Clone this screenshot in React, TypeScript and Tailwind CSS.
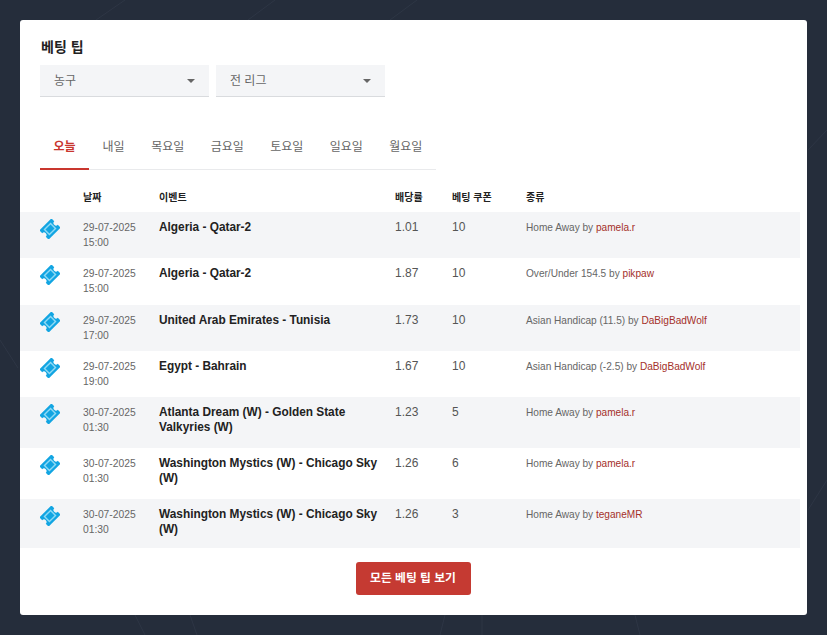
const rows = [
  { d: "29-07-2025", t: "15:00", e: "Algeria - Qatar-2", o: "1.01", c: "10", k: "Home Away", u: "pamela.r", h: "h-[46.3px]" },
  { d: "29-07-2025", t: "15:00", e: "Algeria - Qatar-2", o: "1.87", c: "10", k: "Over/Under 154.5", u: "pikpaw", h: "h-[46.3px]" },
  { d: "29-07-2025", t: "17:00", e: "United Arab Emirates - Tunisia", o: "1.73", c: "10", k: "Asian Handicap (11.5)", u: "DaBigBadWolf", h: "h-[46.3px]" },
  { d: "29-07-2025", t: "19:00", e: "Egypt - Bahrain", o: "1.67", c: "10", k: "Asian Handicap (-2.5)", u: "DaBigBadWolf", h: "h-[46.3px]" },
  { d: "30-07-2025", t: "01:30", e: "Atlanta Dream (W) - Golden State Valkyries (W)", o: "1.23", c: "5", k: "Home Away", u: "pamela.r", h: "h-[50.9px]" },
  { d: "30-07-2025", t: "01:30", e: "Washington Mystics (W) - Chicago Sky (W)", o: "1.26", c: "6", k: "Home Away", u: "pamela.r", h: "h-[50.9px]" },
  { d: "30-07-2025", t: "01:30", e: "Washington Mystics (W) - Chicago Sky (W)", o: "1.26", c: "3", k: "Home Away", u: "teganeMR", h: "h-[49px]" },
];
const tabs = ["오늘", "내일", "목요일", "금요일", "토요일", "일요일", "월요일"];

function Ticket() {
  return (
    <svg width="20" height="20" viewBox="0 0 20 20" className="block">
      <g transform="rotate(-45 10 10)">
        <path d="M1.5 3.5h17v4a2.5 2.5 0 0 0 0 5v4h-17v-4a2.5 2.5 0 0 0 0-5z" fill="#12a5e2" />
        <rect x="5" y="5.8" width="10" height="8.4" fill="#8fdaf5" />
        <rect x="6.4" y="7.2" width="7.2" height="5.6" fill="#12a5e2" />
      </g>
    </svg>
  );
}

function Select({ label }: { label: string }) {
  return (
    <div className="w-[169px] h-8 bg-[#f4f5f7] border-b border-[#d9dbde] flex items-center justify-between pl-[14px] pr-[14px] text-xs text-[#666]">
      <span>{label}</span>
      <span className="w-0 h-0 border-l-[4px] border-r-[4px] border-t-[4px] border-l-transparent border-r-transparent border-t-[#666]" />
    </div>
  );
}

export default function App() {
  return (
    <div
      className="relative w-[827px] h-[635px] overflow-hidden bg-[#252d3b] pt-5 pl-5"
      style={{ fontFamily: '"Liberation Sans", "Noto Sans CJK KR", sans-serif' }}
    >
      <svg className="absolute inset-0" width="827" height="635" fill="none" stroke="#2e3645" strokeWidth="1">
        <path d="M96 20L125 0M248 20L275 0M390 20L417 0M808 150L827 130M808 510L827 480" />
        <path d="M0 340L18 368M135 615L145 635M190 615L197 635M445 615L440 635M482 615L482 635M635 615L640 635" />
      </svg>
      <div className="relative w-[787px] h-[595px] bg-white rounded-[3px] pt-[17px]">
        <h2 className="pl-[21px] text-sm leading-5 font-bold text-[#222]">베팅 팁</h2>
        <div className="flex gap-[7px] pl-5 mt-2">
          <Select label="농구" />
          <Select label="전 리그" />
        </div>
        <div className="ml-5 mt-7 w-[396px] h-[45px] flex border-b border-[#e9eaec]">
          {tabs.map((t, i) => (
            <div
              key={t}
              className={
                i === 0
                  ? "w-[49px] h-[45px] pt-3 text-center text-xs leading-5 font-bold text-[#c9362e] border-b-2 border-[#c9362e]"
                  : i === 1
                    ? "w-[49px] h-[44px] pt-3 text-center text-xs leading-5 text-[#666]"
                    : "w-[59.5px] h-[44px] pt-3 text-center text-xs leading-5 text-[#666]"
              }
            >
              {t}
            </div>
          ))}
        </div>
        <div className="flex h-[42px] items-center pt-[12px] text-[10px] font-bold text-[#222]">
          <div className="w-[63px]" />
          <div className="w-[76px]">날짜</div>
          <div className="w-[236px]">이벤트</div>
          <div className="w-[57px]">배당률</div>
          <div className="w-[74px]">베팅 쿠폰</div>
          <div>종류</div>
        </div>
        <div className="w-[780px]">
          {rows.map((r, i) => (
            <div key={i} className={`flex ${r.h} ${i % 2 === 0 ? "bg-[#f4f5f7]" : "bg-white"}`}>
              <div className="w-[63px] pl-5 pt-[7px]">
                <Ticket />
              </div>
              <div className="w-[76px] pt-[8px] text-[10.3px] leading-[15px] text-[#666]">
                <div>{r.d}</div>
                <div>{r.t}</div>
              </div>
              <div className="w-[236px] pr-2 pt-2 text-[11.85px] leading-[15px] font-bold text-[#222]">{r.e}</div>
              <div className="w-[57px] pt-2 text-xs leading-[15px] text-[#555]">{r.o}</div>
              <div className="w-[74px] pt-2 text-xs leading-[15px] text-[#555]">{r.c}</div>
              <div className="pt-[9px] text-[10.1px] leading-[14px] text-[#666]">
                {r.k} by <span className="text-[#a4302a]">{r.u}</span>
              </div>
            </div>
          ))}
        </div>
        <div className="flex justify-center mt-[14px] pr-[1px]">
          <div className="w-[115px] h-[33px] rounded-[3px] bg-[#c53a32] text-white text-[11.8px] font-bold flex items-center justify-center">
            모든 베팅 팁 보기
          </div>
        </div>
      </div>
    </div>
  );
}
